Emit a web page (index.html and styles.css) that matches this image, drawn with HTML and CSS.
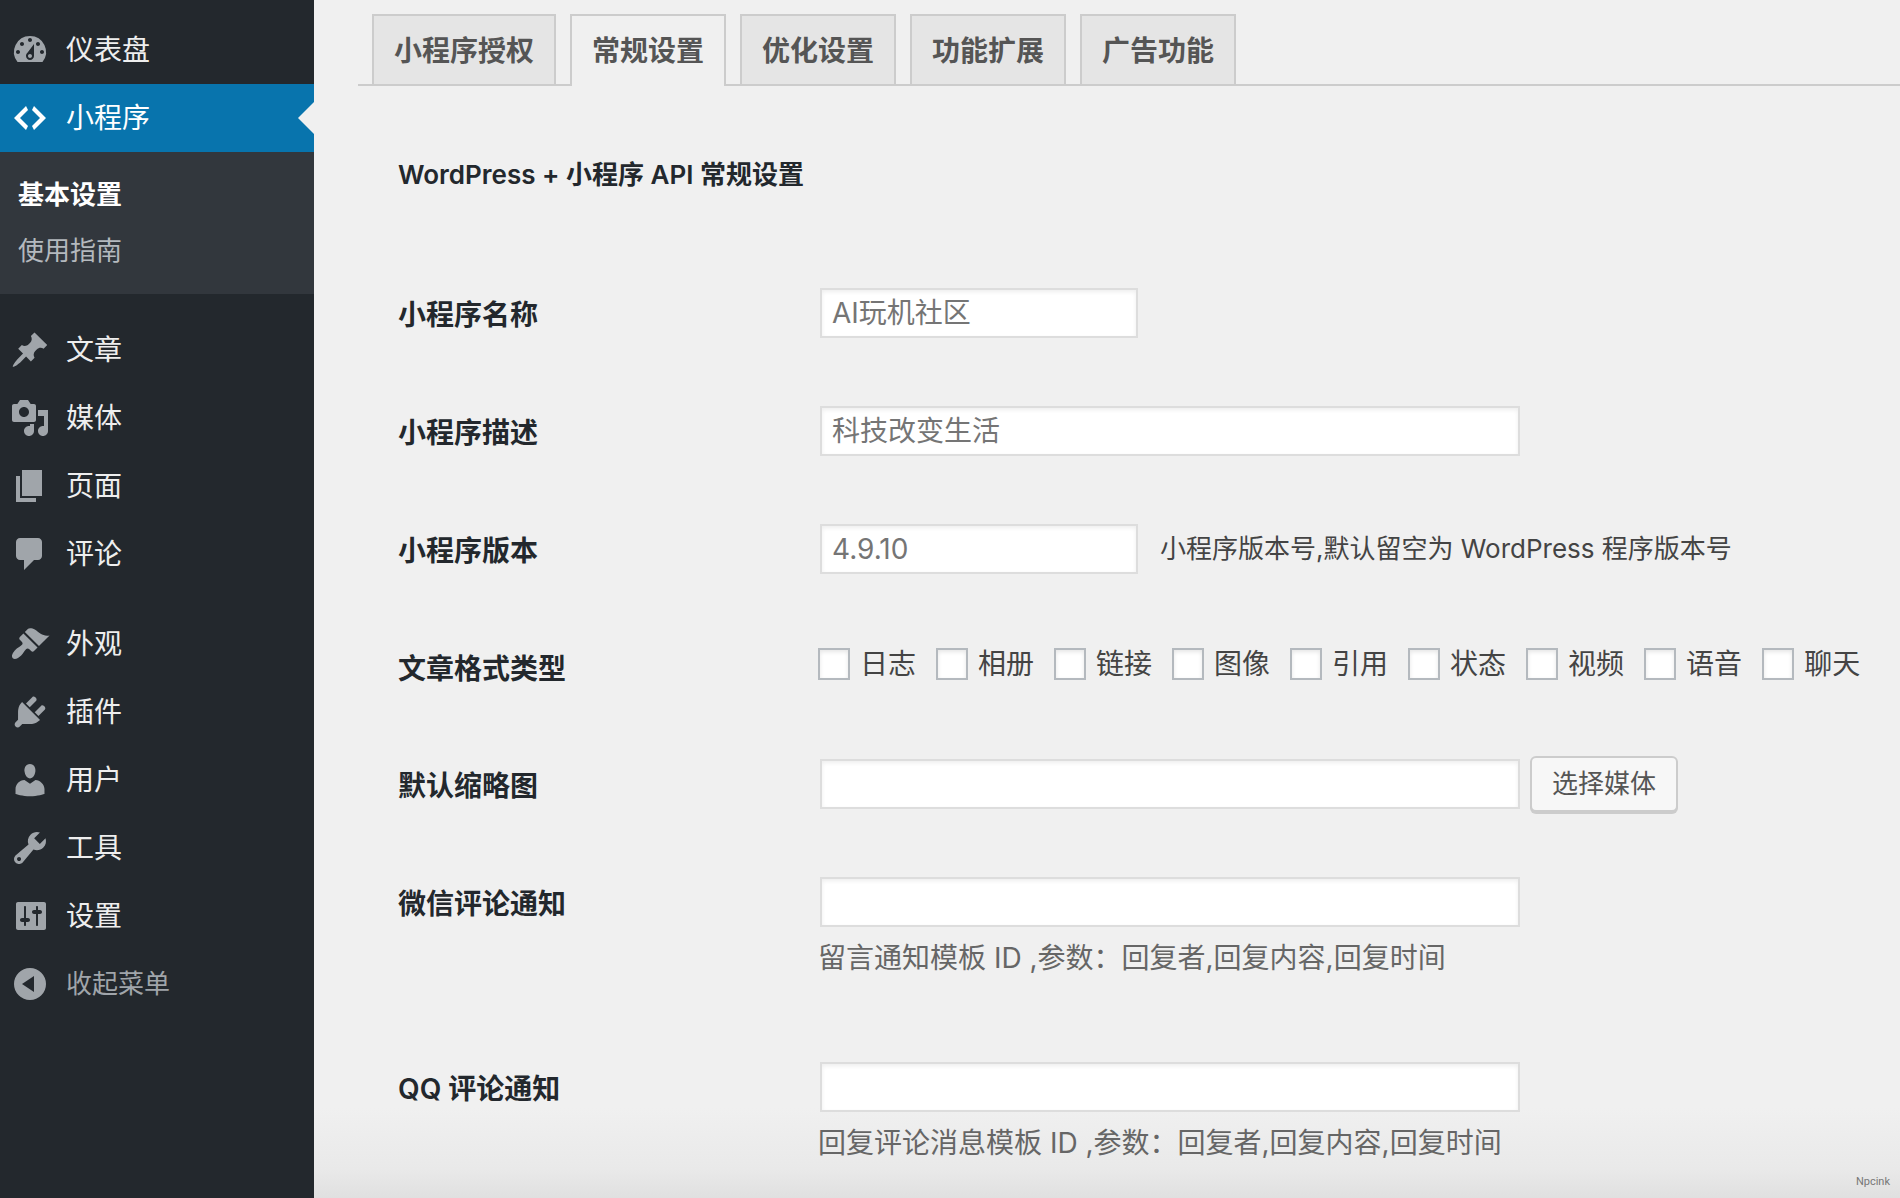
FILE: index.html
```html
<!DOCTYPE html>
<html lang="zh-CN">
<head>
<meta charset="utf-8">
<meta name="viewport" content="width=device-width, initial-scale=1">
<title>小程序 - 常规设置</title>
<link rel="stylesheet" href="styles.css">
</head>
<body>
<div class="layout">
  <nav class="sidebar" aria-label="主菜单">
    <ul class="menu">
      <li><a class="menu-link" href="#"><svg class="icon" viewBox="0 0 20 20"><path fill-rule="evenodd" d="M3.76 16h12.48A7.998 7.998 0 0 0 10 3a7.998 7.998 0 0 0-6.24 13zM10 4c.55 0 1 .45 1 1s-.45 1-1 1-1-.45-1-1 .45-1 1-1zM6 6c.55 0 1 .45 1 1s-.45 1-1 1-1-.45-1-1 .45-1 1-1zm8 0c.55 0 1 .45 1 1s-.45 1-1 1-1-.45-1-1 .45-1 1-1zm-5.37 5.55L12 7v6c0 1.1-.9 2-2 2s-2-.9-2-2c0-.57.24-1.08.63-1.45zM4 10c.55 0 1 .45 1 1s-.45 1-1 1-1-.45-1-1 .45-1 1-1zm12 0c.55 0 1 .45 1 1s-.45 1-1 1-1-.45-1-1 .45-1 1-1zm-5 3c0-.55-.45-1-1-1s-1 .45-1 1 .45 1 1 1 1-.45 1-1z"/></svg>仪表盘</a></li>
      <li>
        <a class="menu-link current" href="#"><svg class="icon" viewBox="0 0 20 20"><path d="M9 6l-4 4 4 4-1 2-6-6 6-6zm2 8l4-4-4-4 1-2 6 6-6 6z"/></svg>小程序</a>
        <ul class="submenu">
          <li><a class="submenu-link selected" href="#">基本设置</a></li>
          <li><a class="submenu-link" href="#">使用指南</a></li>
        </ul>
      </li>
      <li class="group-start"><a class="menu-link" href="#"><svg class="icon" viewBox="0 0 20 20"><path d="M10.44 3.02l1.82-1.82 6.36 6.35-1.83 1.82c-1.05-.68-2.48-.57-3.41.36l-.75.75c-.92.93-1.04 2.35-.35 3.41l-1.83 1.82-2.41-2.41-2.8 2.79c-.42.42-3.38 2.71-3.8 2.29s1.86-3.39 2.28-3.81l2.79-2.79L4.1 9.36l1.83-1.82c1.05.69 2.48.57 3.4-.36l.75-.75c.93-.92 1.05-2.35.36-3.41z"/></svg>文章</a></li>
      <li><a class="menu-link" href="#"><svg class="icon" viewBox="0 0 20 20"><path fill-rule="evenodd" d="M13 11V4c0-.55-.45-1-1-1h-1.67L9 1H5L3.67 3H2c-.55 0-1 .45-1 1v7c0 .55.45 1 1 1h10c.55 0 1-.45 1-1zM7 4.5c1.38 0 2.5 1.12 2.5 2.5S8.38 9.5 7 9.5 4.5 8.38 4.5 7 5.62 4.5 7 4.5zM14 6h5v10.5c0 1.38-1.12 2.5-2.5 2.5S14 17.88 14 16.5s1.12-2.5 2.5-2.5c.17 0 .34.02.5.05V9h-3V6zm-4 8.05V13h2v3.5c0 1.38-1.12 2.5-2.5 2.5S7 17.88 7 16.5 8.12 14 9.5 14c.17 0 .34.02.5.05z"/></svg>媒体</a></li>
      <li><a class="menu-link" href="#"><svg class="icon" viewBox="0 0 20 20"><path d="M6 15V2h10v13H6zm-1 1h8v2H3V5h2v11z"/></svg>页面</a></li>
      <li><a class="menu-link" href="#"><svg class="icon" viewBox="0 0 20 20"><path d="M5 2h9c1.1 0 2 .9 2 2v7c0 1.1-.9 2-2 2h-2l-5 5v-5H5c-1.1 0-2-.9-2-2V4c0-1.1.9-2 2-2z"/></svg>评论</a></li>
      <li class="group-start"><a class="menu-link" href="#"><svg class="icon" viewBox="0 0 20 20"><path d="M14.48 11.06L7.41 3.99l1.5-1.5c.5-.56 2.3-.47 3.51.32 1.21.8 1.43 1.28 2.91 2.1 1.18.64 2.45 1.26 4.45.85zm-.71.71L6.7 4.7 4.93 6.47c-.39.39-.39 1.02 0 1.41l1.06 1.06c.39.39.39 1.03 0 1.42-.6.6-1.43 1.11-2.21 1.69-.35.26-.7.53-1.01.84C1.43 14.23.4 16.08 1.4 17.07c.99 1 2.84-.03 4.18-1.36.31-.31.58-.66.85-1.02.57-.78 1.08-1.61 1.69-2.21.39-.39 1.02-.39 1.41 0l1.06 1.06c.39.39 1.02.39 1.41 0z"/></svg>外观</a></li>
      <li><a class="menu-link" href="#"><svg class="icon" viewBox="0 0 20 20"><path d="M13.11 4.36L9.87 7.6 8 5.73l3.24-3.24c.35-.34 1.05-.2 1.56.32.52.51.66 1.21.31 1.55zm-8 1.77l.91-1.12 9.01 9.01-1.19.84c-.71.71-2.63 1.16-3.82 1.16H6.14L4.9 17.26c-.59.59-1.54.59-2.12 0-.59-.58-.59-1.53 0-2.12l1.24-1.24v-3.88c0-1.13.4-3.19 1.09-3.89zm7.26 3.97l3.24-3.24c.34-.35 1.04-.21 1.55.31.52.51.66 1.21.31 1.55l-3.24 3.25z"/></svg>插件</a></li>
      <li><a class="menu-link" href="#"><svg class="icon" viewBox="0 0 20 20"><path d="M10 9.25c-2.27 0-2.73-3.44-2.73-3.44C7 4.02 7.82 2 9.97 2c2.16 0 2.98 2.02 2.71 3.81 0 0-.41 3.44-2.68 3.44zm0 2.57L12.72 10c2.39 0 4.52 2.33 4.52 4.53v2.49s-3.65 1.13-7.24 1.13c-3.65 0-7.24-1.13-7.24-1.13v-2.49c0-2.25 1.94-4.48 4.47-4.48z"/></svg>用户</a></li>
      <li><a class="menu-link" href="#"><svg class="icon" viewBox="0 0 20 20"><path fill-rule="evenodd" d="M16.68 9.77c-1.34 1.34-3.3 1.67-4.95.99l-5.41 6.52c-.99.99-2.59.99-3.58 0s-.99-2.59 0-3.57l6.52-5.42c-.68-1.65-.35-3.61.99-4.95 1.28-1.28 3.12-1.62 4.72-1.06l-2.89 2.89 2.82 2.82 2.86-2.87c.53 1.58.18 3.39-1.08 4.65zM3.81 16.21c.4.39 1.04.39 1.43 0 .4-.4.4-1.04 0-1.43-.39-.4-1.03-.4-1.43 0-.39.39-.39 1.03 0 1.43z"/></svg>工具</a></li>
      <li><a class="menu-link" href="#"><svg class="icon" viewBox="0 0 20 20"><path fill-rule="evenodd" d="M18 16V4c0-.55-.45-1-1-1H4c-.55 0-1 .45-1 1v12c0 .55.45 1 1 1h13c.55 0 1-.45 1-1zM8 11h1c.55 0 1 .45 1 1s-.45 1-1 1H8v1.5c0 .28-.22.5-.5.5s-.5-.22-.5-.5V13H6c-.55 0-1-.45-1-1s.45-1 1-1h1V5.5c0-.28.22-.5.5-.5s.5.22.5.5V11zm5-2h-1c-.55 0-1-.45-1-1s.45-1 1-1h1V5.5c0-.28.22-.5.5-.5s.5.22.5.5V7h1c.55 0 1 .45 1 1s-.45 1-1 1h-1v5.5c0 .28-.22.5-.5.5s-.5-.22-.5-.5V9z"/></svg>设置</a></li>
      <li><button class="menu-link collapse" type="button"><svg class="icon" viewBox="0 0 20 20"><path fill-rule="evenodd" d="M10 2a8 8 0 1 1 0 16 8 8 0 0 1 0-16zM12 6v8l-6-4z"/></svg>收起菜单</button></li>
    </ul>
  </nav>

  <main class="content">
    <nav class="tabs" aria-label="设置分类">
      <a class="tab" href="#">小程序授权</a>
      <a class="tab active" href="#" aria-current="page">常规设置</a>
      <a class="tab" href="#">优化设置</a>
      <a class="tab" href="#">功能扩展</a>
      <a class="tab" href="#">广告功能</a>
    </nav>

    <form class="settings">
      <h1 class="title">WordPress + 小程序 API 常规设置</h1>

      <div class="row">
        <label class="row-label" for="name">小程序名称</label>
        <div class="field"><div class="line"><input class="text-input" id="name" type="text" placeholder="AI玩机社区"></div></div>
      </div>
      <div class="row">
        <label class="row-label" for="desc">小程序描述</label>
        <div class="field"><div class="line"><input class="text-input wide" id="desc" type="text" placeholder="科技改变生活"></div></div>
      </div>
      <div class="row">
        <label class="row-label" for="version">小程序版本</label>
        <div class="field"><div class="line"><input class="text-input" id="version" type="text" placeholder="4.9.10"><span class="hint">小程序版本号,默认留空为 WordPress 程序版本号</span></div></div>
      </div>
      <div class="row check-row" role="group" aria-labelledby="formats">
        <span class="row-label" id="formats">文章格式类型</span>
        <div class="field">
          <div class="checks">
            <label class="check"><input class="box" type="checkbox">日志</label>
            <label class="check"><input class="box" type="checkbox">相册</label>
            <label class="check"><input class="box" type="checkbox">链接</label>
            <label class="check"><input class="box" type="checkbox">图像</label>
            <label class="check"><input class="box" type="checkbox">引用</label>
            <label class="check"><input class="box" type="checkbox">状态</label>
            <label class="check"><input class="box" type="checkbox">视频</label>
            <label class="check"><input class="box" type="checkbox">语音</label>
            <label class="check"><input class="box" type="checkbox">聊天</label>
          </div>
        </div>
      </div>
      <div class="row">
        <label class="row-label" for="thumb">默认缩略图</label>
        <div class="field"><div class="line"><input class="text-input wide" id="thumb" type="text"><button class="button" type="button">选择媒体</button></div></div>
      </div>
      <div class="row">
        <label class="row-label" for="wechat">微信评论通知</label>
        <div class="field">
          <div class="line"><input class="text-input wide" id="wechat" type="text"></div>
          <p class="description">留言通知模板 ID ,参数：回复者,回复内容,回复时间</p>
        </div>
      </div>
      <div class="row">
        <label class="row-label" for="qq">QQ 评论通知</label>
        <div class="field">
          <div class="line"><input class="text-input wide" id="qq" type="text"></div>
          <p class="description">回复评论消息模板 ID ,参数：回复者,回复内容,回复时间</p>
        </div>
      </div>
    </form>

    <footer class="credit">Npcink</footer>
  </main>
</div>
</body>
</html>
```
FILE: styles.css
```css
* {
  box-sizing: border-box;
}

body {
  margin: 0;
  background: #f0f0f0;
  color: #444;
  font-family: Inter, "Noto Sans CJK SC", sans-serif;
  font-size: 28px;
  line-height: 36px;
}

input,
button {
  font: inherit;
}

.layout {
  display: grid;
  grid-template-columns: 314px minmax(0, 1fr);
  min-height: 100vh;
}

/* Sidebar */
.sidebar {
  padding: 16px 0;
  background: #23282d;
}

.menu,
.submenu {
  margin: 0;
  padding: 0;
  list-style: none;
}

.menu-link {
  position: relative;
  display: flex;
  align-items: center;
  gap: 16px;
  width: 100%;
  height: 68px;
  padding: 0 10px;
  border: 0;
  background: none;
  color: #eee;
  text-decoration: none;
}

.icon {
  flex: none;
  width: 40px;
  height: 40px;
  fill: #a0a5aa;
}

.current {
  background: #0874ad;
  color: #fff;
}

.current .icon {
  fill: #fff;
}

.current::after {
  content: "";
  position: absolute;
  top: 18px;
  right: 0;
  border: 16px solid transparent;
  border-left-width: 0;
  border-right-color: #f0f0f0;
}

.submenu {
  padding: 15px 0;
  background: #32373d;
}

.submenu-link {
  display: block;
  padding: 0 18px;
  color: #b4b9be;
  font-size: 26px;
  line-height: 56px;
  text-decoration: none;
}

.selected {
  color: #fff;
  font-weight: 600;
}

.group-start {
  margin-top: 22px;
}

.collapse {
  color: #a0a5aa;
  font-size: 26px;
}

/* Main column */
.content {
  display: flex;
  flex-direction: column;
  padding-top: 14px;
  background: linear-gradient(to top, #e0e0e0 0, #e9e9e9 28px, #f0f0f0 90px);
}

.tabs {
  display: flex;
  gap: 14px;
  margin-left: 44px;
  padding-left: 14px;
  border-bottom: 2px solid #ccc;
}

.tab {
  height: 70px;
  padding: 0 20px;
  border: 2px solid #ccc;
  border-bottom: 0;
  background: #e5e5e5;
  color: #555;
  font-weight: 600;
  line-height: 70px;
  text-decoration: none;
}

.active {
  height: 72px;
  margin-bottom: -2px;
  background: #f0f0f0;
}

.settings {
  padding-left: 84px;
}

.title {
  margin: 71px 0 62px;
  color: #23282d;
  font-size: 26px;
  font-weight: 600;
  line-height: 36px;
}

.row {
  display: grid;
  grid-template-columns: 420px minmax(0, 1fr);
  min-height: 118px;
}

.row-label {
  padding-top: 42px;
  color: #23282d;
  font-weight: 600;
}

.field {
  padding: 29px 0 51px;
}

.row:last-of-type .field {
  padding-bottom: 0;
}

.row:not(:has(.description)) .field {
  padding-bottom: 24px;
}

.check-row {
  min-height: 117px;
}

.line {
  display: flex;
  align-items: center;
  height: 58px;
  padding-left: 2px;
  margin-bottom: 7px;
}

.text-input {
  width: 318px;
  height: 50px;
  padding: 0 10px;
  border: 2px solid #ddd;
  border-radius: 0;
  background: #fff;
  box-shadow: inset 0 2px 4px rgba(0, 0, 0, 0.07);
  color: #32373c;
}

.text-input::placeholder {
  color: #757575;
  opacity: 1;
}

.wide {
  width: 700px;
}

.hint {
  margin-left: 22px;
  font-size: 26px;
}

.button {
  height: 56px;
  margin-left: 10px;
  padding: 0 20px;
  border: 2px solid #ccc;
  border-radius: 6px;
  background: #f7f7f7;
  box-shadow: 0 2px 0 #ccc;
  color: #555;
  font-size: 26px;
}

.checks {
  display: flex;
  flex-wrap: wrap;
  gap: 20px;
  padding-top: 8px;
}

.check {
  display: flex;
  align-items: center;
  gap: 10px;
}

.box {
  appearance: none;
  width: 32px;
  height: 32px;
  margin: 0;
  border: 2px solid #b4b9be;
  background: #fff;
  box-shadow: inset 0 2px 4px rgba(0, 0, 0, 0.1);
}

.box:checked {
  background: #0874ad;
}

.description {
  margin: 0;
  color: #666;
  line-height: 40px;
}

.credit {
  margin-top: auto;
  padding: 0 10px 6px;
  color: #777;
  font-family: Roboto, sans-serif;
  font-size: 11px;
  line-height: 20px;
  text-align: right;
}
```
